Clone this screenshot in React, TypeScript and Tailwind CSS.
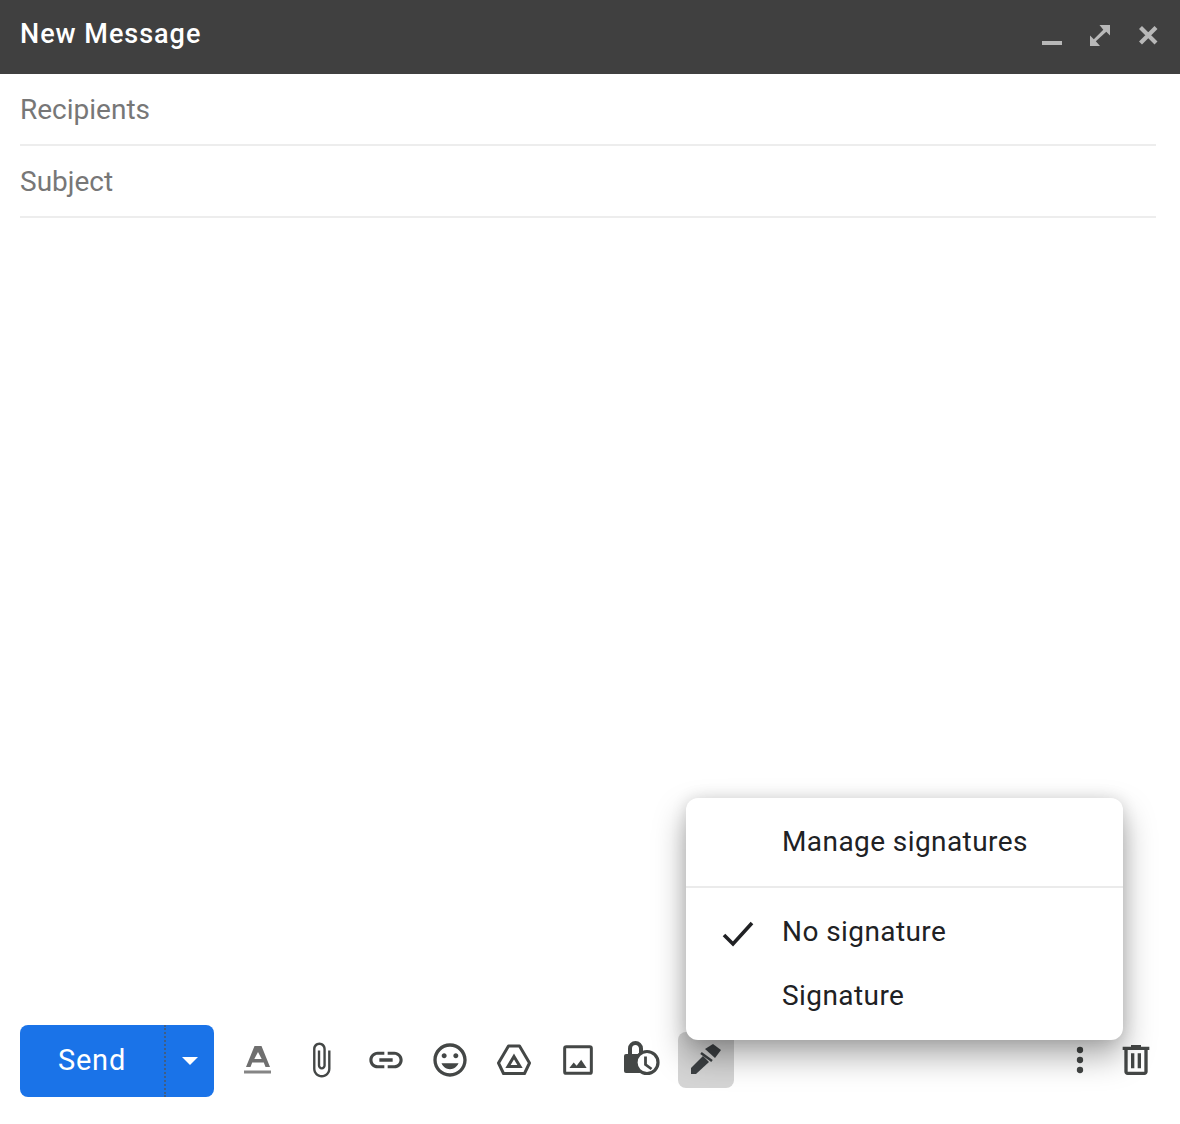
import React from "react";

const Ico = ({ size = 40, color = "#444746", children }: any) => (
    <svg width={size} height={size} viewBox="0 0 24 24" fill={color}>
        {children}
    </svg>
);

const Ico48 = ({ color = "#444746", children }: any) => (
    <svg width="48" height="48" viewBox="0 0 48 48" fill={color}>
        {children}
    </svg>
);

const ToolBtn = ({ active, children }: any) => (
    <div className={`flex h-14 w-14 items-center justify-center rounded-lg ${active ? "bg-[#d5d5d5]" : ""}`}>
        {children}
    </div>
);

const Field = ({ label }: any) => (
    <div className="ml-5 mr-6 flex h-[72px] items-center border-b-2 border-[#ededed] pt-[1px] text-[28px] text-[#777777]">
        {label}
    </div>
);

const MenuRow = ({ label, checked }: any) => (
    <div className="relative flex h-16 items-center pl-24 text-[28px] tracking-[0.42px] text-[#202124]">
        {checked && (
            <svg className="absolute left-[34px] top-[16px]" width="36" height="36" viewBox="0 0 36 36" fill="none" stroke="#202124" strokeWidth="3.6">
                <path d="M4 19 L13 28 L32 7" />
            </svg>
        )}
        {label}
    </div>
);

export default function App() {
    return (
        <div className="relative flex h-[1124px] w-full flex-col overflow-hidden bg-white font-['Roboto',sans-serif]">
            <div className="flex h-[74px] items-center justify-between bg-[#404040] pl-5 pr-2">
                <span className="mb-[6px] text-[27px] font-medium tracking-[0.98px] text-white">New Message</span>
                <div className="mb-[6px] flex">
                    <div className="flex h-12 w-12 items-center justify-center">
                        <svg width="48" height="48" viewBox="0 0 48 48" fill="#b8b8b8">
                            <rect x="14" y="31" width="20" height="4" />
                        </svg>
                    </div>
                    <div className="flex h-12 w-12 items-center justify-center">
                        <svg width="48" height="48" viewBox="0 0 48 48" fill="#b8b8b8">
                            <path d="M14 36V25.500L17.800 29.300L27.300 19.800L23.500 15H34V25.500L30.300 21.800L19.800 31.300L24 36Z" />
                        </svg>
                    </div>
                    <div className="flex h-12 w-12 items-center justify-center">
                        <svg width="48" height="48" viewBox="0 0 48 48" fill="none" stroke="#b8b8b8" strokeWidth="4.200">
                            <path d="M16.500 17.500 L32 33 M32 17.500 L16.500 33" />
                        </svg>
                    </div>
                </div>
            </div>

            <Field label="Recipients" />
            <Field label="Subject" />

            <div className="flex-1" />

            <div className="flex items-center pb-[27px] pl-5 pr-4">
                <div className="flex h-[72px] w-[194px] items-center rounded-lg bg-[#1a73e8] text-white">
                    <div className="flex h-full w-[144px] items-center justify-center text-[29px] font-normal tracking-[0.8px]">
                        Send
                    </div>
                    <div className="flex h-full flex-1 items-center justify-center border-l-2 border-dotted border-[#3f5e86]">
                        <div className="h-0 w-0 border-x-[8px] border-t-[8px] border-x-transparent border-t-white" />
                    </div>
                </div>

                <div className="mb-0.5 ml-4 flex gap-2">
                    <ToolBtn>
                        <Ico48 color="#6f6f6f">
                            <path fillRule="evenodd" d="M20.500 10H27.500L36 31H31.500L29.800 26.500H18.200L16.500 31H12ZM24 16L20.300 23H27.700Z" />
                            <rect x="10" y="34.500" width="27" height="3" fill="#858585" />
                        </Ico48>
                    </ToolBtn>
                    <ToolBtn>
                        <div className="-ml-[3px]">
                            <Ico size={38}>
                                <path d="M16.500 6v11.500c0 2.210-1.790 4-4 4s-4-1.790-4-4V5c0-1.380 1.120-2.500 2.500-2.500s2.500 1.120 2.500 2.500v10.500c0 .55-.45 1-1 1s-1-.45-1-1V6H10v9.500c0 1.380 1.120 2.500 2.500 2.500s2.500-1.120 2.500-2.500V5c0-2.210-1.790-4-4-4S7 2.790 7 5v12.500c0 3.040 2.460 5.500 5.500 5.500s5.500-2.460 5.500-5.500V6h-1.500z" />
                            </Ico>
                        </div>
                    </ToolBtn>
                    <ToolBtn>
                        <Ico>
                            <path d="M3.900 12c0-1.710 1.390-3.100 3.100-3.100h4V7H7c-2.760 0-5 2.240-5 5s2.240 5 5 5h4v-1.900H7c-1.710 0-3.100-1.390-3.100-3.100zM8 13h8v-2H8v2zm9-6h-4v1.900h4c1.710 0 3.100 1.390 3.100 3.100s-1.390 3.100-3.100 3.100h-4V17h4c2.760 0 5-2.240 5-5s-2.240-5-5-5z" />
                        </Ico>
                    </ToolBtn>
                    <ToolBtn>
                        <Ico>
                            <path d="M11.990 2C6.470 2 2 6.480 2 12s4.470 10 9.990 10C17.520 22 22 17.520 22 12S17.520 2 11.990 2zM12 20c-4.420 0-8-3.580-8-8s3.580-8 8-8 8 3.580 8 8-3.580 8-8 8zm3.500-9c.83 0 1.500-.67 1.500-1.500S16.330 8 15.500 8 14 8.670 14 9.500s.67 1.500 1.500 1.500zm-7 0c.83 0 1.500-.67 1.500-1.500S9.330 8 8.500 8 7 8.670 7 9.500 7.670 11 8.500 11zm3.500 6.500c2.330 0 4.310-1.460 5.110-3.500H6.890c.8 2.040 2.780 3.500 5.110 3.500z" />
                        </Ico>
                    </ToolBtn>
                    <ToolBtn>
                        <Ico48>
                            <path d="M18.500 10H29.500L39.500 27L34.500 37.500H13.500L8.500 27Z" fill="none" stroke="#444746" strokeWidth="3" strokeLinejoin="round" />
                            <path d="M24 20.500L30 30.500H18Z" fill="none" stroke="#444746" strokeWidth="3" />
                        </Ico48>
                    </ToolBtn>
                    <ToolBtn>
                        <Ico>
                            <rect x="4" y="4" width="16" height="16" rx="1" fill="none" stroke="#444746" strokeWidth="1.800" />
                            <path d="M6.800 16.800l2.600-3.300 1.800 2 2.700-3.600 3.300 4.900z" />
                        </Ico>
                    </ToolBtn>
                    <ToolBtn>
                        <Ico48>
                            <path d="M12 18V12.500a5.500 5.500 0 0 1 11 0V18" fill="none" stroke="#444746" strokeWidth="4" />
                            <rect x="6" y="18" width="20" height="19" rx="2" />
                            <circle cx="29" cy="26.500" r="11" fill="#fff" stroke="#444746" strokeWidth="3.200" />
                            <path d="M27.500 20.500V28.500L33.500 33" fill="none" stroke="#444746" strokeWidth="2.800" />
                        </Ico48>
                    </ToolBtn>
                    <ToolBtn active>
                        <Ico48 color="#3c4043">
                            <path d="M9 38V32L21 20L27 26L14 38Z" />
                            <path d="M19 17L30 25" fill="none" stroke="#3c4043" strokeWidth="2.500" />
                            <path d="M23 13L31 8L39 14L33 22Z" />
                        </Ico48>
                    </ToolBtn>
                </div>

                <div className="mb-0.5 ml-auto flex">
                    <ToolBtn>
                        <Ico>
                            <circle cx="12" cy="6" r="1.900" />
                            <circle cx="12" cy="12" r="1.900" />
                            <circle cx="12" cy="18" r="1.900" />
                        </Ico>
                    </ToolBtn>
                    <ToolBtn>
                        <Ico>
                            <path d="M15 4V3H9v1H4v2h1v13c0 1.100.9 2 2 2h10c1.100 0 2-.9 2-2V6h1V4h-5zm2 15H7V6h10v13zM9 8h2v9H9V8zm4 0h2v9h-2V8z" />
                        </Ico>
                    </ToolBtn>
                </div>
            </div>

            <div className="absolute left-[686px] top-[798px] w-[437px] rounded-xl bg-white py-3 shadow-[0_16px_32px_rgba(0,0,0,0.34),0_0_16px_rgba(0,0,0,0.12)]">
                <MenuRow label="Manage signatures" />
                <div className="my-3 h-0.5 bg-[#ebebeb]" />
                <MenuRow label="No signature" checked />
                <MenuRow label="Signature" />
            </div>
        </div>
    );
}
